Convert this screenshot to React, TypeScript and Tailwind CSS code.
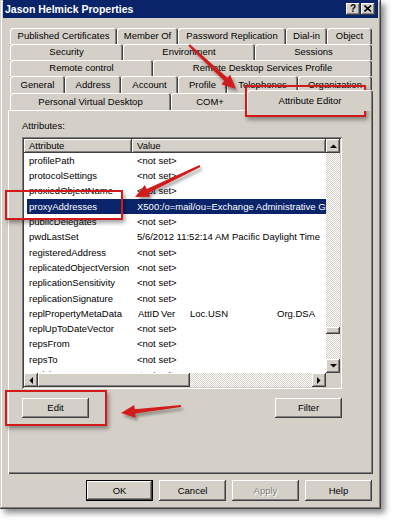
import React from "react";

type Tab = { label: string; w: string };

const row1: Tab[] = [
  { label: "Published Certificates", w: "w-[107px]" },
  { label: "Member Of", w: "w-[61px]" },
  { label: "Password Replication", w: "w-[108px]" },
  { label: "Dial-in", w: "w-[41px]" },
  { label: "Object", w: "w-[45px]" },
];
const row2: Tab[] = [
  { label: "Security", w: "w-[113px]" },
  { label: "Environment", w: "w-[132px]" },
  { label: "Sessions", w: "w-[117px]" },
];
const row3: Tab[] = [
  { label: "Remote control", w: "w-[143px]" },
  { label: "Remote Desktop Services Profile", w: "w-[219px]" },
];
const row4: Tab[] = [
  { label: "General", w: "w-[55px]" },
  { label: "Address", w: "w-[56px]" },
  { label: "Account", w: "w-[57px]" },
  { label: "Profile", w: "w-[49px]" },
  { label: "Telephones", w: "w-[71px]" },
  { label: "Organization", w: "w-[74px]" },
];

const TAB =
  "h-full shrink-0 flex items-center justify-center text-[9.5px] leading-none bg-[#d4d0c8] rounded-t-[3px] shadow-[inset_1px_1px_#ffffff,inset_-1px_0_#404040,inset_-2px_0_#808080]";
const RAISED =
  "bg-[#d4d0c8] shadow-[inset_-1px_-1px_#404040,inset_1px_1px_#ffffff,inset_-2px_-2px_#808080]";
const CHECKER =
  "bg-[image:repeating-conic-gradient(#d4d0c8_0_25%,#ffffff_0_50%)] bg-[length:2px_2px]";

function TabRow({ tabs, h }: { tabs: Tab[]; h: string }) {
  return (
    <div className={`flex ${h}`}>
      {tabs.map((t) => (
        <div key={t.label} className={`${TAB} ${t.w}`}>
          {t.label}
        </div>
      ))}
    </div>
  );
}

const rows: [string, string][] = [
  ["profilePath", "<not set>"],
  ["protocolSettings", "<not set>"],
  ["proxiedObjectName", "<not set>"],
  ["proxyAddresses", "X500:/o=mail/ou=Exchange Administrative Group (FYDIBOHF23SPDLT)"],
  ["publicDelegates", "<not set>"],
  ["pwdLastSet", "5/6/2012 11:52:14 AM Pacific Daylight Time"],
  ["registeredAddress", "<not set>"],
  ["replicatedObjectVersion", "<not set>"],
  ["replicationSensitivity", "<not set>"],
  ["replicationSignature", "<not set>"],
  ["replPropertyMetaData", "META"],
  ["replUpToDateVector", "<not set>"],
  ["repsFrom", "<not set>"],
  ["repsTo", "<not set>"],
  ["revision", "<not set>"],
];

function Tri({ dir }: { dir: "up" | "down" | "left" | "right" }) {
  const pts =
    dir === "up"
      ? "0,4 7,4 3.5,0.5"
      : dir === "down"
      ? "0,0 7,0 3.5,3.5"
      : dir === "left"
      ? "4,0 4,7 0.5,3.5"
      : "0,0 0,7 3.5,3.5";
  const w = dir === "up" || dir === "down" ? 7 : 4;
  const h = dir === "up" || dir === "down" ? 4 : 7;
  return (
    <svg width={w} height={h} viewBox={`0 0 ${w} ${h}`}>
      <polygon points={pts} fill="#000" />
    </svg>
  );
}

function arrowPoints(tx: number, ty: number, hx: number, hy: number) {
  const dx = hx - tx;
  const dy = hy - ty;
  const L = Math.hypot(dx, dy);
  const ux = dx / L;
  const uy = dy / L;
  const nx = -uy;
  const ny = ux;
  const hl = 14;
  const hw = 6.5;
  const bx = hx - ux * hl;
  const by = hy - uy * hl;
  const p = (x: number, y: number) => `${x.toFixed(1)},${y.toFixed(1)}`;
  return [
    p(tx + nx * 1, ty + ny * 1),
    p(bx + nx * 2.2, by + ny * 2.2),
    p(bx + nx * hw, by + ny * hw),
    p(hx, hy),
    p(bx - nx * hw, by - ny * hw),
    p(bx - nx * 2.2, by - ny * 2.2),
    p(tx - nx * 1, ty - ny * 1),
  ].join(" ");
}

function Button({
  label,
  disabled,
  def,
  h,
}: {
  label: string;
  disabled?: boolean;
  def?: boolean;
  h: string;
}) {
  return (
    <div
      className={`w-[67px] ${h} flex items-center justify-center text-[9.5px] leading-none ${
        def ? "border border-black" : ""
      } ${RAISED} ${disabled ? "text-[#808080] [text-shadow:1px_1px_0_#ffffff]" : "text-black"}`}
    >
      {label}
    </div>
  );
}

export default function App() {
  return (
    <div className="relative w-[396px] h-[525px] bg-white overflow-hidden font-['Liberation_Sans',Arial,sans-serif] text-black">
      {/* window */}
      <div className="w-[381px] h-[509px] bg-[#d4d0c8] px-[3px] flex flex-col shadow-[inset_-1px_-1px_#404040,inset_1px_1px_#d4d0c8,inset_-2px_-2px_#808080,inset_2px_2px_#ffffff,4px_4px_6px_rgba(0,0,0,0.45)]">
        {/* title bar */}
        <div className="h-[18px] shrink-0 bg-[#0a246a] flex items-center pl-[2px] pr-[3px]">
          <span className="text-white font-bold text-[10.5px] leading-none">Jason Helmick Properties</span>
          <div className="ml-auto flex gap-[1px]">
            <div className={`w-[14px] h-[12px] ${RAISED} flex items-center justify-center text-[10px] font-bold leading-none pb-[1px]`}>
              ?
            </div>
            <div className={`w-[14px] h-[12px] ${RAISED} flex items-center justify-center pb-[1px] pr-[1px]`}>
              <svg width="8" height="7" viewBox="0 0 8 7">
                <path d="M0.5 0.5 L7 6.5 M7 0.5 L0.5 6.5" stroke="#000" strokeWidth="1.6" />
              </svg>
            </div>
          </div>
        </div>

        {/* body */}
        <div className="pl-[5px] flex flex-col">
          {/* tabs */}
          <div className="mt-[10px] ml-[2px] w-[362px] flex flex-col">
            <TabRow tabs={row1} h="h-[16px]" />
            <TabRow tabs={row2} h="h-[16px]" />
            <TabRow tabs={row3} h="h-[16px]" />
            <TabRow tabs={row4} h="h-[17px]" />
            <div className="flex h-[17px]">
              <div className={`${TAB} w-[161px]`}>Personal Virtual Desktop</div>
              <div className={`${TAB} w-[78px]`}>COM+</div>
              <div className="relative z-10 -ml-[2px] -mt-[3px] h-[21px] w-[126px] shrink-0 flex items-center justify-center text-[9.5px] leading-none bg-[#d4d0c8] rounded-t-[3px] shadow-[inset_1px_1px_#ffffff,inset_-1px_0_#404040,inset_-2px_0_#808080]">
                Attribute Editor
              </div>
            </div>
          </div>

          {/* panel */}
          <div className="w-[365px] h-[364px] pl-[14px] flex flex-col shadow-[inset_1px_1px_#ffffff,inset_-1px_-1px_#404040,inset_-2px_-2px_#808080]">
            <div className="mt-[10px] h-[12px] leading-[12px] text-[9.5px]">Attributes:</div>

            {/* list view */}
            <div className="mt-[5px] w-[320px] h-[252px] p-[2px] bg-white flex flex-col shadow-[inset_1px_1px_#808080,inset_-1px_-1px_#ffffff,inset_2px_2px_#404040,inset_-2px_-2px_#d4d0c8]">
              <div className="flex h-[234px]">
                <div className="w-[302px] flex flex-col">
                  <div className="flex h-[14px] shrink-0 text-[9.5px] leading-none">
                    <div className={`w-[108px] ${RAISED} flex items-center pl-[5px]`}>Attribute</div>
                    <div className={`flex-1 ${RAISED} flex items-center pl-[5px]`}>Value</div>
                  </div>
                  <div className="flex-1 overflow-hidden">
                    {rows.map(([name, value]) => {
                      const sel = name === "proxyAddresses";
                      return (
                        <div key={name} className="h-[15.3px] pl-[3px] flex text-[9.5px] leading-none">
                          <div
                            className={`flex-1 flex items-center whitespace-nowrap overflow-hidden ${
                              sel ? "bg-[#0a246a] text-white" : ""
                            }`}
                          >
                            <div className="w-[110px] shrink-0 pl-[2px]">{name}</div>
                            {value === "META" ? (
                              <div className="flex">
                                <span className="w-[24px] pl-[1px]">AttID</span>
                                <span className="w-[29px]">Ver</span>
                                <span className="w-[87px]">Loc.USN</span>
                                <span>Org.DSA</span>
                              </div>
                            ) : (
                              <div>{value}</div>
                            )}
                          </div>
                        </div>
                      );
                    })}
                  </div>
                </div>
                {/* vertical scrollbar */}
                <div className="w-[14px] flex flex-col">
                  <div className={`h-[14px] ${RAISED} flex items-center justify-center`}>
                    <Tri dir="up" />
                  </div>
                  <div className={`flex-1 ${CHECKER} flex flex-col`}>
                    <div className="h-[174px]" />
                    <div className={`h-[7px] ${RAISED}`} />
                  </div>
                  <div className={`h-[14px] ${RAISED} flex items-center justify-center`}>
                    <Tri dir="down" />
                  </div>
                </div>
              </div>
              {/* horizontal scrollbar */}
              <div className="flex h-[14px]">
                <div className="w-[302px] flex">
                  <div className={`w-[14px] ${RAISED} flex items-center justify-center`}>
                    <Tri dir="left" />
                  </div>
                  <div className={`w-[152px] ${RAISED}`} />
                  <div className={`flex-1 ${CHECKER}`} />
                  <div className={`w-[14px] ${RAISED} flex items-center justify-center`}>
                    <Tri dir="right" />
                  </div>
                </div>
                <div className="w-[14px] bg-[#d4d0c8]" />
              </div>
            </div>

            {/* Edit / Filter */}
            <div className="mt-[9px] w-[320px] flex justify-between">
              <Button label="Edit" h="h-[20px]" />
              <Button label="Filter" h="h-[20px]" />
            </div>
          </div>

          {/* dialog buttons */}
          <div className="mt-[6px] w-[365px] pr-[1px] flex justify-end gap-[6px]">
            <Button label="OK" def h="h-[21px]" />
            <Button label="Cancel" h="h-[21px]" />
            <Button label="Apply" disabled h="h-[21px]" />
            <Button label="Help" h="h-[21px]" />
          </div>
        </div>
      </div>

      {/* annotations */}
      <div className="absolute left-[245px] top-[85px] w-[121px] h-[32px] border-2 border-[#d11a1a] shadow-[2px_3px_4px_rgba(0,0,0,0.35)]" />
      <div className="absolute left-[5px] top-[190px] w-[118px] h-[30px] border-2 border-[#d11a1a] shadow-[2px_3px_4px_rgba(0,0,0,0.35)]" />
      <div className="absolute left-[5px] top-[390px] w-[102px] h-[36px] border-2 border-[#d11a1a] shadow-[2px_3px_4px_rgba(0,0,0,0.35)]" />
      <svg className="absolute left-0 top-0 pointer-events-none" width="396" height="525" viewBox="0 0 396 525">
        <defs>
          <filter id="ds" x="-20%" y="-20%" width="140%" height="140%">
            <feDropShadow dx="2" dy="3" stdDeviation="1.5" floodColor="#000" floodOpacity="0.35" />
          </filter>
        </defs>
        <g fill="#d11a1a" filter="url(#ds)">
          <polygon points={arrowPoints(189, 45, 236, 89)} />
          <polygon points={arrowPoints(200, 166, 135, 197)} />
          <polygon points={arrowPoints(181, 406, 121, 413)} />
        </g>
      </svg>
    </div>
  );
}
